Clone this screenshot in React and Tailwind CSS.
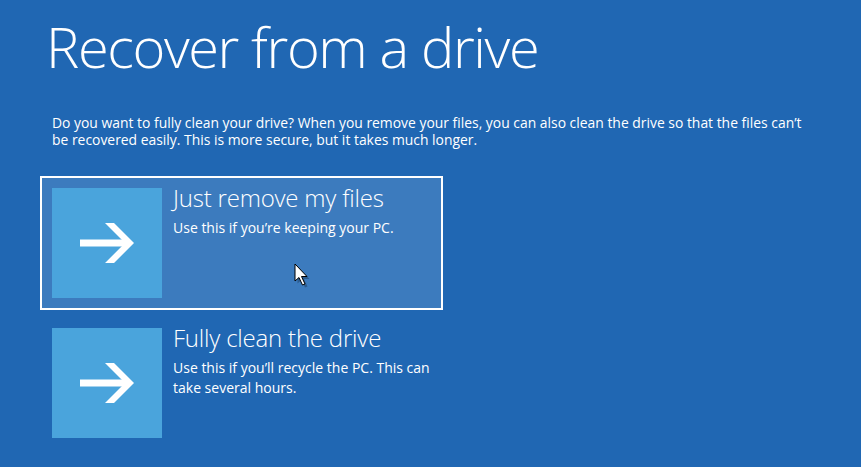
import React from "react";

function Arrow() {
  return (
    <svg width="54" height="40" viewBox="0 0 54 40" fill="white">
      <rect x="0" y="16.5" width="46" height="7" />
      <path d="M25 0H34L54 20L34 40H25L45 20Z" />
    </svg>
  );
}

function Cursor() {
  return (
    <svg width="18" height="26" viewBox="0 0 18 26" className="absolute left-[294px] top-[263px]">
      <path d="M2 2V19L6 15.5L9.5 23L12 22L8.5 14.5H14Z" fill="black" opacity="0.25" transform="translate(1.5 1.5)" />
      <path d="M1 1V18L5 14.5L8.5 22L11 21L7.5 13.5H13Z" fill="white" stroke="black" strokeWidth="1" strokeLinejoin="miter" />
    </svg>
  );
}

function Option({ title, desc, active }) {
  return (
    <div
      className={
        "w-[403px] h-[134px] flex gap-[11px] " +
        (active ? "border-2 border-white bg-[#3c7bbe] p-[10px]" : "p-[12px]")
      }
    >
      <div className="w-[110px] h-[110px] shrink-0 bg-[#4aa4dc] flex items-center justify-center">
        <Arrow />
      </div>
      <div className="flex flex-col">
        <div className="text-[24px] leading-[28px] font-light text-white mt-[-4px] tracking-[-0.2px]">{title}</div>
        <div className="text-[14px] leading-[20px] text-white w-[262px] mt-[6px]">{desc}</div>
      </div>
    </div>
  );
}

export default function App() {
  return (
    <div
      className="relative w-[861px] h-[467px] overflow-hidden bg-[#2067b3] text-white"
      style={{ fontFamily: '"Open Sans", "Noto Sans", sans-serif' }}
    >
      <div className="pl-[40px] pt-[10px]">
        <h1 className="pl-[6px] text-[56px] leading-[72px] font-light tracking-[-1.4px]">Recover from a drive</h1>
        <p className="pl-[12px] mt-[32px] text-[13.9px] leading-[17px] w-[770px]">
          Do you want to fully clean your drive? When you remove your files, you can also clean the drive so that the files can’t be recovered easily. This is more secure, but it takes much longer.
        </p>
        <div className="mt-[28px] flex flex-col gap-[6px]">
          <Option title="Just remove my files" desc="Use this if you’re keeping your PC." active />
          <Option title="Fully clean the drive" desc="Use this if you’ll recycle the PC. This can take several hours." />
        </div>
      </div>
      <Cursor />
    </div>
  );
}
